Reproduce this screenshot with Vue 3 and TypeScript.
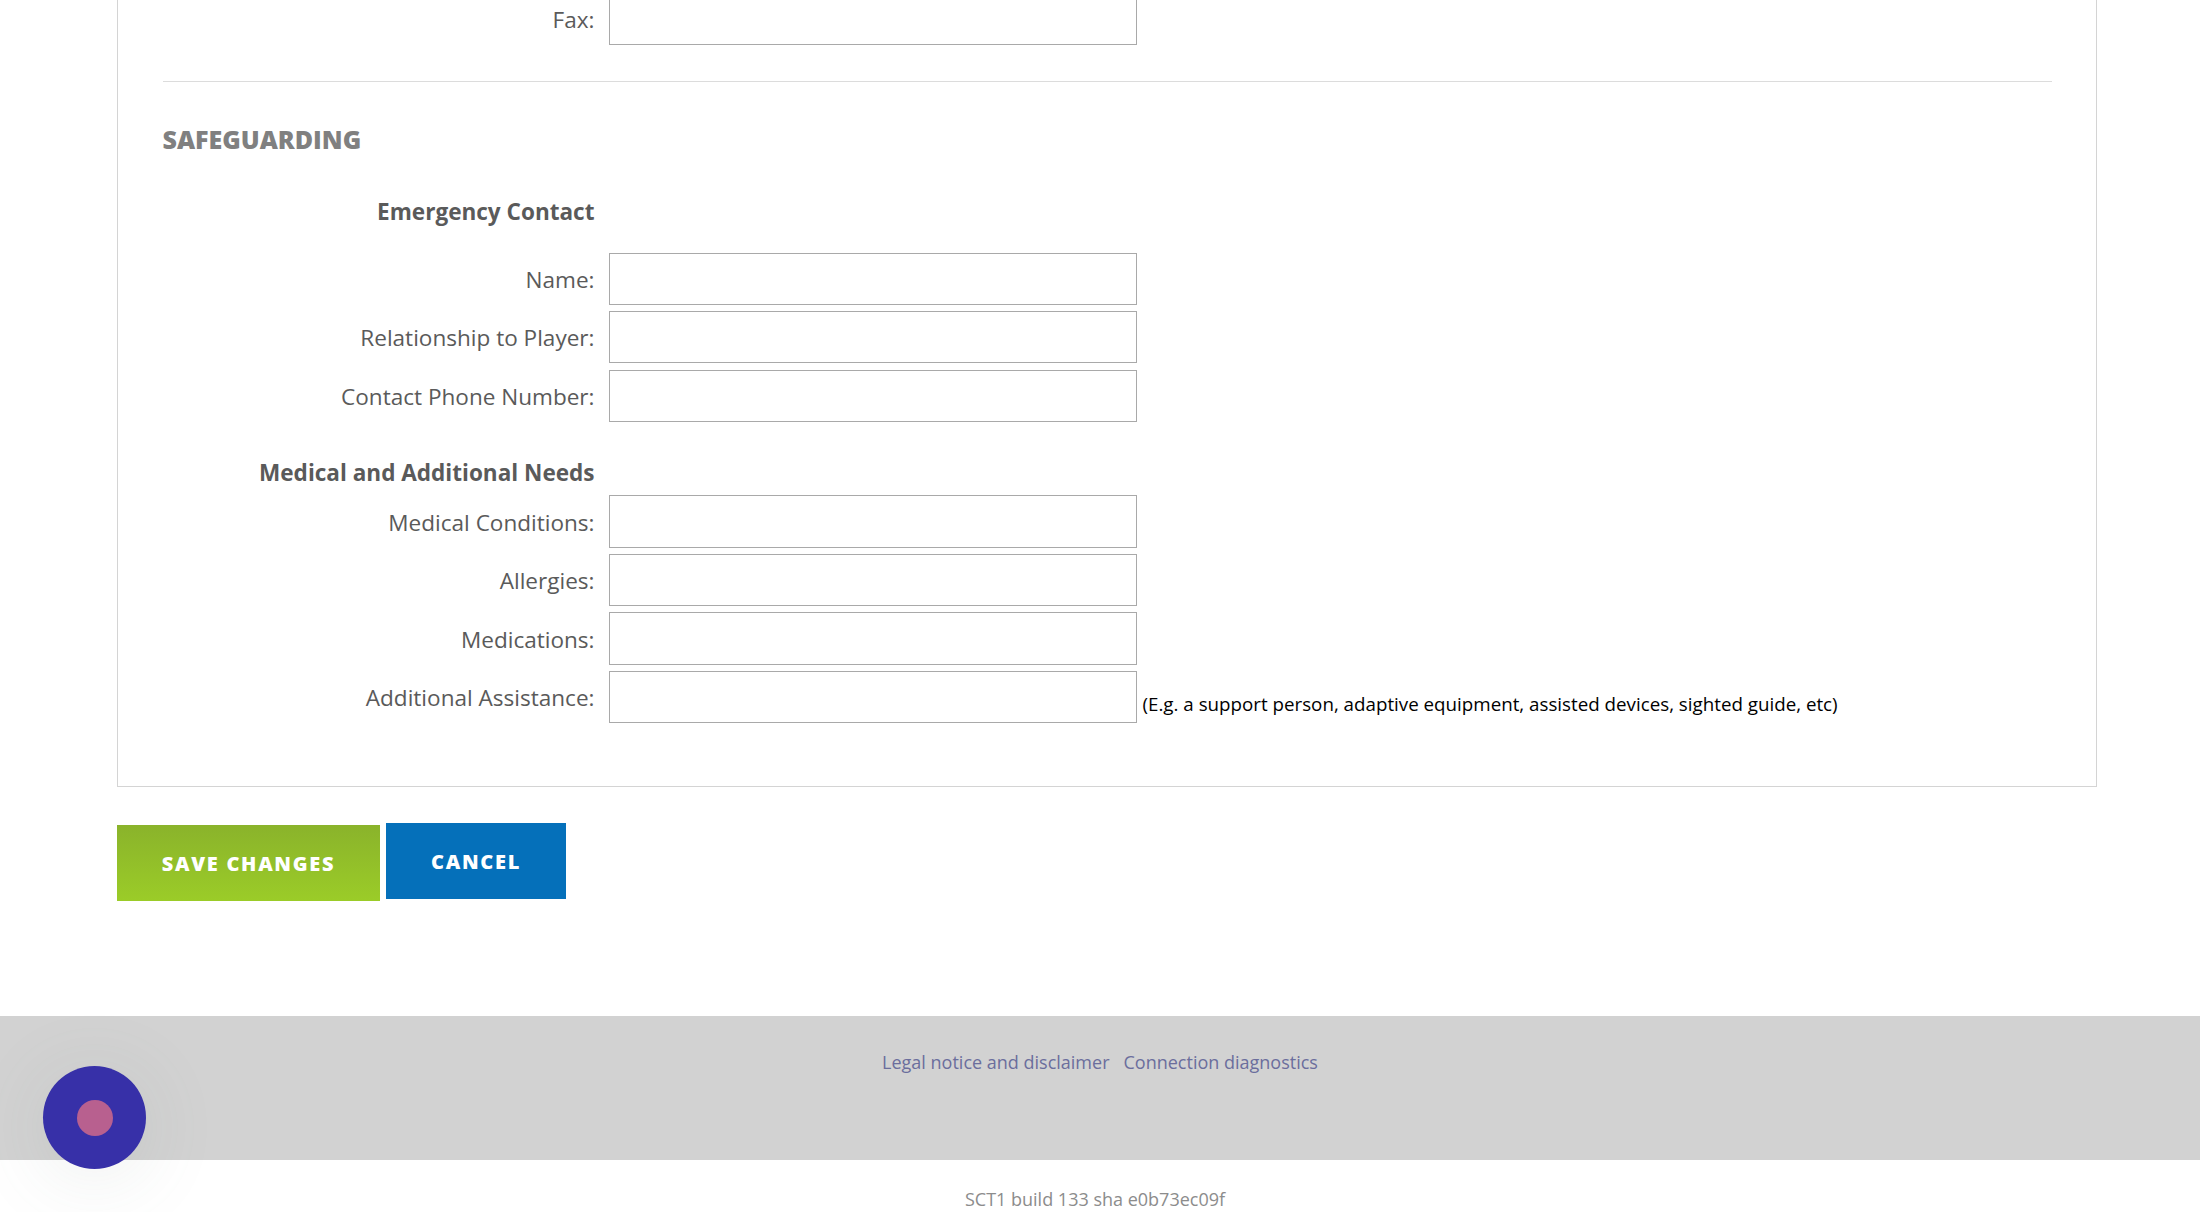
<script setup lang="ts">
const emergency = ['Name:', 'Relationship to Player:', 'Contact Phone Number:']
const medical = ['Medical Conditions:', 'Allergies:', 'Medications:']
</script>

<template>
  <div class="page">
    <main class="content">
      <section class="panel">
        <div class="row fax-row">
          <label class="label">Fax:</label>
          <input class="field" type="text" />
        </div>
        <hr class="rule" />
        <h2 class="section-title">SAFEGUARDING</h2>
        <div class="row sub-row emergency-head">
          <div class="label sub">Emergency Contact</div>
        </div>
        <div class="group">
          <div v-for="item in emergency" :key="item" class="row">
            <label class="label">{{ item }}</label>
            <input class="field" type="text" />
          </div>
        </div>
        <div class="row sub-row medical-head">
          <div class="label sub">Medical and Additional Needs</div>
        </div>
        <div class="group">
          <div v-for="item in medical" :key="item" class="row">
            <label class="label">{{ item }}</label>
            <input class="field" type="text" />
          </div>
          <div class="row">
            <label class="label">Additional Assistance:</label>
            <input class="field" type="text" />
            <span class="hint">(E.g. a support person, adaptive equipment, assisted devices, sighted guide, etc)</span>
          </div>
        </div>
      </section>
      <div class="actions">
        <button class="btn save" type="button">SAVE CHANGES</button>
        <button class="btn cancel" type="button">CANCEL</button>
      </div>
    </main>
    <footer class="footer">
      <nav class="links">
        <a class="link">Legal notice and disclaimer</a>
        <a class="link">Connection diagnostics</a>
      </nav>
    </footer>
    <div class="build">SCT1 build 133 sha e0b73ec09f</div>
    <div class="launcher"><span class="launcher-dot"></span></div>
  </div>
</template>

<style>
html, body { margin: 0; background: #fff; }
</style>

<style scoped>
.page {
  position: relative;
  height: 1212px;
  overflow: hidden;
  background: #fff;
  font-family: "Open Sans", "Liberation Sans", sans-serif;
  color: #5a5a5a;
}
.content {
  margin-top: -29px;
  padding: 0 103px 0 117px;
  height: 1045px;
  box-sizing: border-box;
}
.panel {
  box-sizing: border-box;
  height: 816px;
  border: 2px solid #d4d4d4;
  border-width: 0 1.5px 1.5px 1.5px;
  padding: 21.7px 44px 0 44.5px;
}
.row {
  display: flex;
  align-items: center;
  gap: 14px;
  height: 52.3px;
}
.label {
  width: 432px;
  flex: none;
  margin-top: 2px;
  text-align: right;
  font-size: 22.55px;
  line-height: 30px;
  color: #5a5a5a;
}
.field {
  box-sizing: border-box;
  width: 528px;
  height: 52.3px;
  flex: none;
  margin: 0;
  padding: 0;
  border: 1.5px solid #a9a9a9;
  background: #fff;
}
.hint {
  margin: 12px 0 0 -8px;
  font-size: 18.75px;
  color: #000;
  white-space: nowrap;
}
.rule {
  margin: 36px 0 0;
  border: 0;
  border-top: 1.5px solid #dcdcdc;
}
.section-title {
  margin: 38px 0 0;
  font-size: 25px;
  line-height: 38px;
  font-weight: 800;
  color: #808080;
}
.sub-row { height: 30px; }
.emergency-head { margin-top: 39px; }
.medical-head { margin-top: 36px; }
.sub { margin-top: 0; font-weight: 700; color: #5a5a5a; }
.group { display: flex; flex-direction: column; gap: 6.2px; }
.emergency-head + .group { margin-top: 25.7px; }
.medical-head + .group { margin-top: 7.5px; }
.actions {
  display: flex;
  align-items: flex-start;
  gap: 6px;
  margin-top: 36px;
}
.btn {
  border: 0;
  padding: 0;
  height: 76px;
  color: #fff;
  font-family: inherit;
  font-size: 20px;
  font-weight: 800;
  letter-spacing: 1.7px;
}
.save {
  width: 263px;
  margin-top: 2px;
  background: linear-gradient(#8ab32b, #9bcc28);
}
.cancel {
  width: 180px;
  background: #0570ba;
}
.footer {
  box-sizing: border-box;
  height: 144px;
  padding-top: 32.5px;
  background: #d2d2d2;
}
.links {
  display: flex;
  justify-content: center;
  gap: 14px;
  font-size: 18px;
  line-height: 26px;
  color: #6b6e9d;
}
.build {
  margin-top: 26px;
  padding-right: 10px;
  text-align: center;
  font-size: 18px;
  line-height: 26px;
  color: #8c8c8c;
}
.launcher {
  position: absolute;
  left: 43px;
  top: 1066px;
  width: 103px;
  height: 103px;
  border-radius: 50%;
  background: #3730a8;
  display: flex;
  align-items: center;
  justify-content: center;
  box-shadow: 0 10px 80px rgba(110, 125, 115, 0.12);
}
.launcher-dot {
  width: 36px;
  height: 36px;
  border-radius: 50%;
  background: #b8608f;
}
</style>
